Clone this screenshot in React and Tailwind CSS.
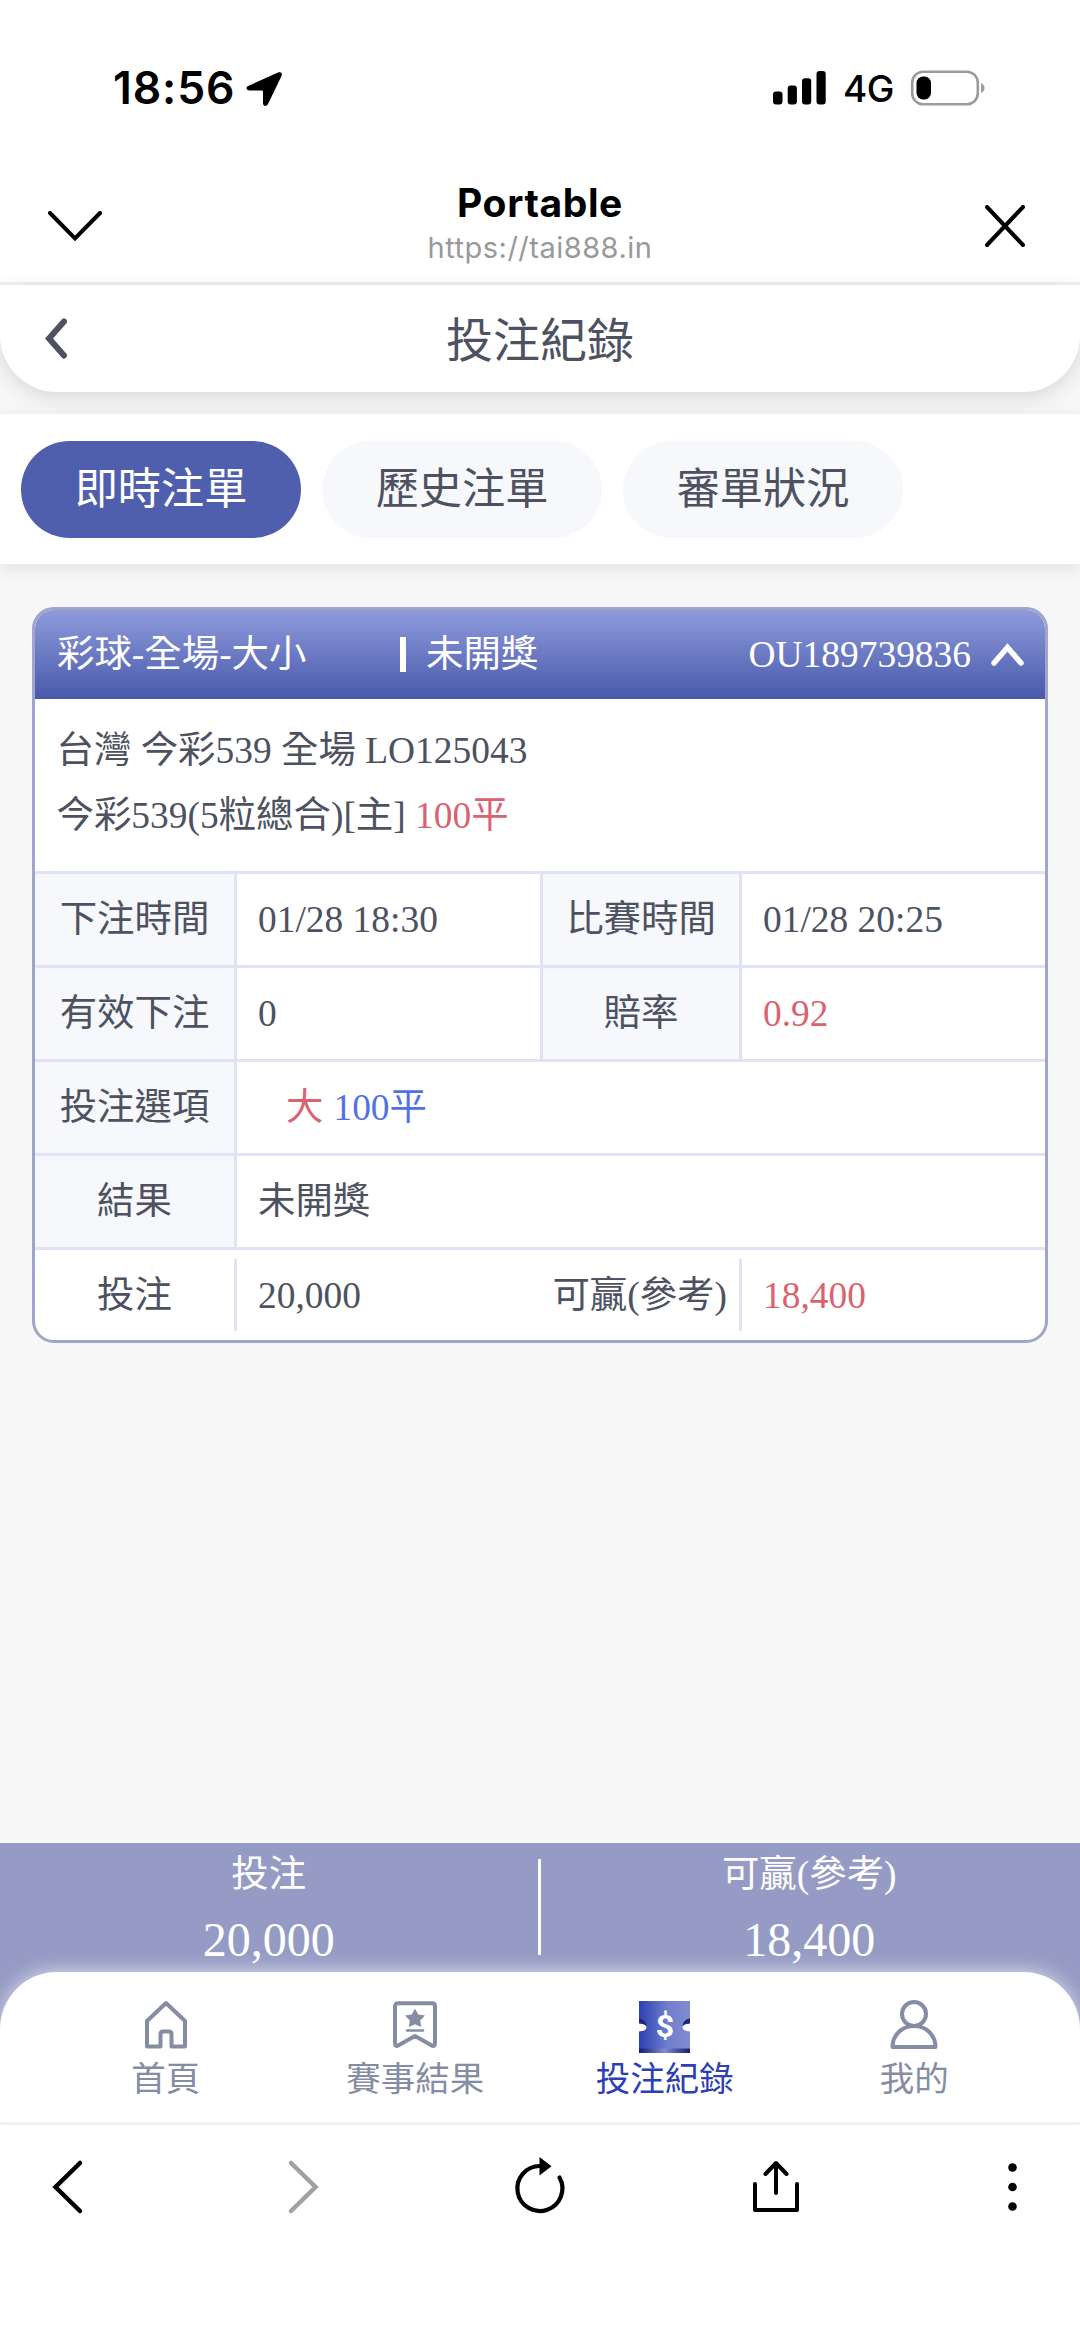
const SANS = "font-['Inter','Noto_Sans_CJK_TC',sans-serif]";
const MIXED = "font-['Liberation_Serif','Noto_Sans_CJK_TC',serif]";

function StatusBar() {
  return (
    <div className="flex h-[158px] shrink-0 items-start justify-between pt-[60px] pr-[94px] pl-[113px]">
      <div className="flex items-center gap-[11px]">
        <span className="text-[44.500px] leading-[56px] font-semibold tracking-[0.9px]">18:56</span>
        <svg width="37" height="36" viewBox="0 0 37 36" className="mt-[1px]">
          <path d="M2 15 32 1.600C35 .4 36.700 2 35.500 5L22 33C20.500 36 17 35.500 17 32V20.500Q17 19.500 16 19.500H4C0 19.500-.5 16.200 2 15Z" fill="#000" />
        </svg>
      </div>
      <div className="flex items-center pt-[1px]">
        <svg width="54" height="34" viewBox="0 0 54 34" className="mt-[-2px]">
          <rect x="0" y="20.500" width="9.500" height="13" rx="3" />
          <rect x="14.700" y="14.500" width="9.200" height="19" rx="3" />
          <rect x="29" y="7.200" width="9.200" height="26.300" rx="3" />
          <rect x="43.500" y="0" width="9.200" height="33.500" rx="3" />
        </svg>
        <span className="ml-[16px] text-[37px] leading-[56px] font-medium tracking-[-0.5px]">4G</span>
        <svg width="76" height="36" viewBox="0 0 76 36" className="mt-[-2px] ml-[16px]">
          <rect x="2.200" y="1.700" width="65.600" height="32.600" rx="11" fill="none" stroke="#9b9b9b" strokeWidth="2.600" />
          <rect x="6.500" y="6.500" width="14.500" height="23" rx="6.500" />
          <path d="M71 13Q74.500 15 74.500 18T71 23Z" fill="#9b9b9b" />
        </svg>
      </div>
    </div>
  );
}

function BrowserHeader() {
  return (
    <div className="flex h-[127px] shrink-0 items-start justify-between border-b-3 border-[#f0f0f0] px-[48px]">
      <svg width="54" height="31" viewBox="0 0 54 31" className="mt-[53px]">
        <path d="M2 2 27 27.500 52 2" fill="none" stroke="#000" strokeWidth="4" strokeLinecap="round" />
      </svg>
      <div className="flex flex-col items-center pt-[20px]">
        <div className="text-[39px] leading-[50px] font-bold tracking-[0.6px]">Portable</div>
        <div className="text-[29px] leading-[40px] tracking-[0.5px] text-[#999]">https://tai888.in</div>
      </div>
      <svg width="40" height="42" viewBox="0 0 40 42" className="mt-[47px] mr-[7px] ml-[7px]">
        <path d="M2 2 38 40M38 2 2 40" fill="none" stroke="#000" strokeWidth="4" strokeLinecap="round" />
      </svg>
    </div>
  );
}

function PageHeader() {
  return (
    <div className="flex h-[107px] shrink-0 items-center rounded-b-[57px] bg-white px-[45px] shadow-[0_6px_20px_rgba(0,0,0,0.12)]">
      <svg width="24" height="41" viewBox="0 0 24 41">
        <path d="M19 3.500 4 20.500 19 37.500" fill="none" stroke="#4d5160" strokeWidth="6" strokeLinecap="round" />
      </svg>
      <h1 className="flex-1 pt-[2px] pr-[24px] text-center text-[47px] leading-[60px]">投注紀錄</h1>
    </div>
  );
}

function Tabs() {
  const tabs = ["即時注單", "歷史注單", "審單狀況"];
  return (
    <div className="z-10 mt-[22px] flex h-[150px] shrink-0 items-center gap-[21.500px] bg-white px-[21.300px] shadow-[0_4px_16px_rgba(0,0,0,0.09)]">
      {tabs.map((t, i) => (
        <div
          key={t}
          className={
            i === 0
              ? "flex h-[97px] w-[279.500px] items-center justify-center rounded-full bg-[#505eae] pb-[2px] text-[43.200px] text-white"
              : "flex h-[97px] w-[279.500px] items-center justify-center rounded-full bg-[#f6f8fc] pb-[2px] text-[43.200px]"
          }
        >
          {t}
        </div>
      ))}
    </div>
  );
}

function Label({ children }) {
  return <div className="flex items-center justify-center border-r-3 border-[#e0e3f4] bg-[#f6f8fc] pt-[3px]">{children}</div>;
}

function InnerLabel({ children }) {
  return <div className="flex items-center justify-center border-x-3 border-[#e0e3f4] bg-[#f6f8fc] pt-[3px]">{children}</div>;
}

function Row({ children }) {
  return <div className="grid h-[94px] grid-cols-[202px_303px_202px_1fr] border-t-3 border-[#e0e3f4]">{children}</div>;
}

function BetCard() {
  return (
    <div className={`mx-[32px] mt-[43px] h-[736px] w-[1016px] shrink-0 overflow-hidden rounded-[22px] border-3 border-[#9fa5cb] bg-white text-[37.440px] ${MIXED}`}>
      <div className="flex h-[88.500px] items-center bg-gradient-to-b from-[#8f9bdc] to-[#4a59aa] pr-[21px] pl-[22px] text-white">
        <span className="w-[343px] pt-[2px]">彩球-全場-大小</span>
        <span className="h-[35px] w-[6px] bg-white" />
        <span className="ml-[20px] pt-[2px]">未開獎</span>
        <span className="ml-auto pt-[2px]">OU189739836</span>
        <svg width="33" height="24" viewBox="0 0 33 24" className="mt-[2px] ml-[20px]">
          <path d="M3 20 16.500 4.500 30 20" fill="none" stroke="#fff" strokeWidth="5.500" strokeLinecap="round" />
        </svg>
      </div>
      <div className="h-[172px] px-[21.500px] pt-[20.500px] leading-[64.500px]">
        <div>台灣 今彩539 全場 LO125043</div>
        <div>
          今彩539(5粒總合)[主] <span className="text-[#d9636f]">100平</span>
        </div>
      </div>
      <Row>
        <Label>下注時間</Label>
        <div className="flex items-center pt-[3px] pl-[21px]">01/28 18:30</div>
        <InnerLabel>比賽時間</InnerLabel>
        <div className="flex items-center pt-[3px] pl-[21px]">01/28 20:25</div>
      </Row>
      <Row>
        <Label>有效下注</Label>
        <div className="flex items-center pt-[3px] pl-[21px]">0</div>
        <InnerLabel>賠率</InnerLabel>
        <div className="flex items-center pt-[3px] pl-[21px] text-[#d9636f]">0.92</div>
      </Row>
      <Row>
        <Label>投注選項</Label>
        <div className="col-span-3 flex items-center gap-[10px] pt-[3px] pl-[49px] text-[#d9636f]">
          大<span className="text-[#5470e8]">100平</span>
        </div>
      </Row>
      <Row>
        <Label>結果</Label>
        <div className="col-span-3 flex items-center pt-[3px] pl-[21px]">未開獎</div>
      </Row>
      <div className="grid h-[94px] grid-cols-[202px_303px_202px_1fr] border-t-3 border-[#e0e3f4] pt-[9px] pb-[10px]">
        <div className="flex items-center justify-center border-r-3 border-[#e0e3f4] pt-[3px]">投注</div>
        <div className="flex items-center pt-[3px] pl-[21px]">20,000</div>
        <div className="flex items-center justify-end border-r-3 border-[#e0e3f4] pt-[3px] pr-[12px] whitespace-nowrap">可贏(參考)</div>
        <div className="flex items-center pt-[3px] pl-[21px] text-[#d9636f]">18,400</div>
      </div>
    </div>
  );
}

function Totals() {
  return (
    <div className={`flex h-[186px] shrink-0 bg-[#959bc4] pr-[2px] text-white ${MIXED}`}>
      <div className="flex flex-1 flex-col items-center pt-[3px]">
        <div className="text-[37.440px] leading-[58px]">投注</div>
        <div className="mt-[7px] text-[48px] leading-[58px]">20,000</div>
      </div>
      <div className="mt-[16px] h-[96px] w-[3px] bg-white" />
      <div className="flex flex-1 flex-col items-center pt-[3px]">
        <div className="text-[37.440px] leading-[58px]">可贏(參考)</div>
        <div className="mt-[7px] text-[48px] leading-[58px]">18,400</div>
      </div>
    </div>
  );
}

function HomeIcon() {
  return (
    <svg width="44" height="54" viewBox="0 0 44 54">
      <path d="M22 3 3 21V46.500H16.500V34Q16.500 31.500 19 31.500H25Q27.500 31.500 27.500 34V46.500H41V21Z" fill="none" stroke="#858da4" strokeWidth="4" strokeLinejoin="round" />
    </svg>
  );
}

function ResultIcon() {
  return (
    <svg width="46" height="54" viewBox="0 0 46 54">
      <path d="M6 3.200H40Q43 3.200 43 6.500V43Q43 47.500 39 45L23 36 7 45Q3 47.500 3 43V6.500Q3 3.200 6 3.200Z" fill="none" stroke="#858da4" strokeWidth="4" strokeLinejoin="round" />
      <path d="M23 8.500 26.200 14.500 33 15.600 28.200 20.400 29.200 27 23 24.200 16.800 27 17.800 20.400 13 15.600 19.800 14.500Z" fill="#858da4" />
      <path d="M15 30.500H31" stroke="#858da4" strokeWidth="2.600" strokeLinecap="round" />
    </svg>
  );
}

function TicketIcon() {
  return (
    <svg width="51" height="54" viewBox="0 0 51 54">
      <defs>
        <linearGradient id="ticket">
          <stop offset="0" stopColor="#2c40b3" />
          <stop offset=".55" stopColor="#6f7ecd" />
          <stop offset="1" stopColor="#828bd0" />
        </linearGradient>
        <linearGradient id="ticketEdge">
          <stop offset="0" stopColor="#101d6e" />
          <stop offset=".5" stopColor="#7f8bd6" />
          <stop offset="1" stopColor="#14206e" />
        </linearGradient>
      </defs>
      <rect width="51" height="48" y="1" fill="url(#ticket)" />
      <rect width="51" height="4.500" y="48.500" fill="url(#ticketEdge)" />
      <path d="M0 18.500Q7 19.500 7.500 26H0ZM51 18.500Q44 19.500 43.500 26H51Z" fill="#1a2878" />
      <path d="M0 23.500Q7.500 24 7.500 27.500T0 31.500ZM51 23.500Q43.500 24 43.500 27.500T51 31.500Z" fill="#fff" />
      <text x="26" y="36.800" textAnchor="middle" fontFamily="Roboto" fontWeight="700" fontSize="32" fill="#fff">$</text>
    </svg>
  );
}

function UserIcon() {
  return (
    <svg width="48" height="54" viewBox="0 0 48 54">
      <g fill="none" stroke="#858da4" strokeWidth="4" strokeLinejoin="round">
        <ellipse cx="24" cy="14" rx="12" ry="12" />
        <path d="M2.500 47C2.500 35 12 26 24 26S45.500 35 45.500 47Z" />
      </g>
    </svg>
  );
}

function BottomNav() {
  const items = [
    ["首頁", HomeIcon],
    ["賽事結果", ResultIcon],
    ["投注紀錄", TicketIcon],
    ["我的", UserIcon],
  ];
  return (
    <div className="z-10 mt-[-57px] flex h-[150px] shrink-0 rounded-t-[57px] bg-white px-[41px] pt-[28px] shadow-[0_-2px_18px_rgba(255,255,255,0.6)]">
      {items.map(([label, Icon], i) => (
        <div key={label} className={i === 2 ? "flex flex-1 flex-col items-center text-[#2c40b3]" : "flex flex-1 flex-col items-center text-[#858da4]"}>
          <Icon />
          <div className="text-[34.500px] leading-[50px]">{label}</div>
        </div>
      ))}
    </div>
  );
}

function Toolbar() {
  return (
    <div className="flex h-[226px] shrink-0 items-start border-t-3 border-[#f0f0f0] bg-white pt-[30px] pl-[43px]">
      <svg width="50" height="62" viewBox="0 0 50 62">
        <path d="M37 8 12.500 32 37 56" fill="none" stroke="#000" strokeWidth="4.500" strokeLinecap="round" />
      </svg>
      <svg width="50" height="62" viewBox="0 0 50 62" className="ml-[185px]">
        <path d="M13 8 37.500 32 13 56" fill="none" stroke="#a0a0a0" strokeWidth="4.500" strokeLinecap="round" />
      </svg>
      <svg width="60" height="62" viewBox="0 0 60 62" className="ml-[182px]">
        <path d="M30 11A22.500 22.500 0 1 0 49.500 22.500" fill="none" stroke="#000" strokeWidth="4.200" strokeLinecap="round" />
        <path d="M29.500 2 41.500 11.200 29.500 20.500Z" />
      </svg>
      <svg width="60" height="62" viewBox="0 0 60 62" className="ml-[176px]">
        <path d="M9 29V55H51V29M30 38V9M19.500 19 30 8 40.500 19" fill="none" stroke="#000" strokeWidth="4" strokeLinecap="round" strokeLinejoin="round" />
      </svg>
      <svg width="17" height="62" viewBox="0 0 17 62" className="ml-[198px]">
        <circle cx="8.500" cy="12.500" r="4.300" />
        <circle cx="8.500" cy="32" r="4.300" />
        <circle cx="8.500" cy="51.500" r="4.300" />
      </svg>
    </div>
  );
}

export default function App() {
  return (
    <div className={`flex h-[2348px] w-[1080px] flex-col overflow-hidden bg-white text-[#4d5160] ${SANS}`}>
      <div className="shrink-0 text-black">
        <StatusBar />
        <BrowserHeader />
      </div>
      <div className="flex flex-1 flex-col bg-[#f7f7f7]">
        <PageHeader />
        <Tabs />
        <BetCard />
        <div className="flex-1" />
        <Totals />
        <BottomNav />
      </div>
      <Toolbar />
    </div>
  );
}
